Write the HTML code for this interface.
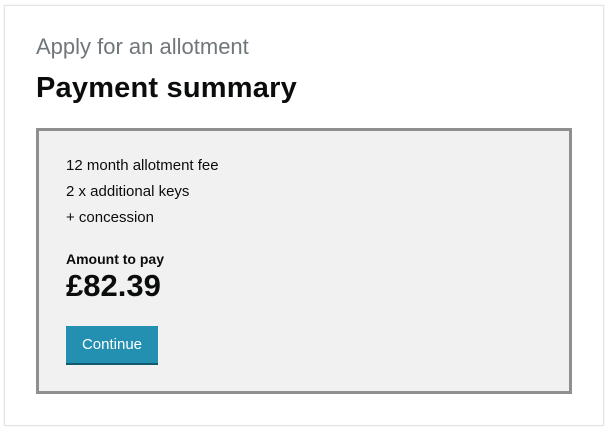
<!DOCTYPE html>
<html><head><style>
body{margin:0;width:608px;height:431px;background:#fff;font-family:"Liberation Sans",Arial,sans-serif;position:relative;overflow:hidden}
.card{position:absolute;left:4px;top:5px;width:598px;height:419px;border:1px solid #e2e2e2;box-shadow:0 0 2px rgba(0,0,0,.08)}
.t{position:absolute;white-space:nowrap}
.box{position:absolute;left:36px;top:128px;width:530px;height:260px;border:3px solid #8f8f8f;background:#f1f1f1}
.btn{position:absolute;left:66px;top:326px;width:92px;height:37px;background:#2490b1;border-bottom:2px solid #125a6e;color:#fff;font-size:15px;text-align:center;line-height:38px}
</style></head><body>
<div class="card"></div>
<div class="t" style="left:36px;top:34px;font-size:22px;color:#6f777b">Apply for an allotment</div>
<div class="t" style="left:36px;top:72px;font-size:29px;font-weight:bold;color:#0b0c0c;letter-spacing:0.2px">Payment summary</div>
<div class="box"></div>
<div class="t" style="left:66px;top:157px;font-size:15px;color:#0b0c0c">12 month allotment fee</div>
<div class="t" style="left:66px;top:183px;font-size:15px;color:#0b0c0c">2 x additional keys</div>
<div class="t" style="left:66px;top:209px;font-size:15px;color:#0b0c0c">+ concession</div>
<div class="t" style="left:66px;top:251px;font-size:14px;font-weight:bold;color:#0b0c0c">Amount to pay</div>
<div class="t" style="left:66px;top:268px;font-size:31px;font-weight:bold;color:#0b0c0c">£82.39</div>
<div class="btn">Continue</div>
</body></html>
